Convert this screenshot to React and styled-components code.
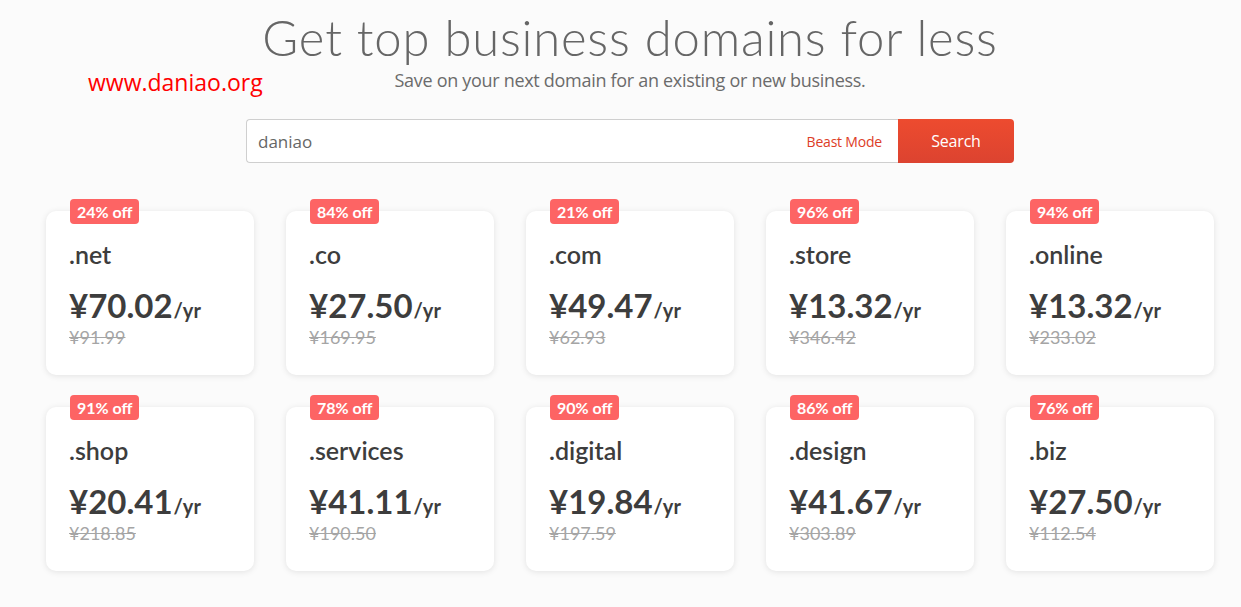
import React from "react";
import styled, { createGlobalStyle } from "styled-components";

const domains = [
  { off: "24% off", name: ".net", price: "¥70.02", old: "¥91.99" },
  { off: "84% off", name: ".co", price: "¥27.50", old: "¥169.95" },
  { off: "21% off", name: ".com", price: "¥49.47", old: "¥62.93" },
  { off: "96% off", name: ".store", price: "¥13.32", old: "¥346.42" },
  { off: "94% off", name: ".online", price: "¥13.32", old: "¥233.02" },
  { off: "91% off", name: ".shop", price: "¥20.41", old: "¥218.85" },
  { off: "78% off", name: ".services", price: "¥41.11", old: "¥190.50" },
  { off: "90% off", name: ".digital", price: "¥19.84", old: "¥197.59" },
  { off: "86% off", name: ".design", price: "¥41.67", old: "¥303.89" },
  { off: "76% off", name: ".biz", price: "¥27.50", old: "¥112.54" },
];

const App = () => {
  return (
    <Page>
      <GlobalStyle />
      <Watermark>www.daniao.org</Watermark>
      <Content>
        <Title>Get top business domains for less</Title>
        <Subtitle>Save on your next domain for an existing or new business.</Subtitle>
        <SearchForm>
          <InputWrap>
            <Input defaultValue="daniao" />
            <BeastMode>Beast Mode</BeastMode>
          </InputWrap>
          <SearchButton>Search</SearchButton>
        </SearchForm>
        <Grid>
          {domains.map((d) => (
            <Card key={d.name}>
              <Badge>{d.off}</Badge>
              <DomainName>{d.name}</DomainName>
              <Price>
                {d.price}
                <Per>/yr</Per>
              </Price>
              <OldPrice>{d.old}</OldPrice>
            </Card>
          ))}
        </Grid>
      </Content>
    </Page>
  );
};

const GlobalStyle = createGlobalStyle`
  body {
    margin: 0;
    background: #fbfbfb;
    font-family: Lato, "Open Sans", sans-serif;
  }
`;

const Page = styled.div`
  position: relative;
  width: 1241px;
  height: 607px;
  overflow: hidden;
  background: #fbfbfb;
`;

const Watermark = styled.div`
  position: absolute;
  left: 88px;
  top: 66px;
  font-family: "Open Sans", sans-serif;
  font-size: 23px;
  color: #ff0000;
`;

const Content = styled.div`
  width: 1168px;
  margin-left: 46px;
  display: flex;
  flex-direction: column;
  align-items: center;
`;

const Title = styled.h1`
  margin: 8px 0 0;
  font-family: Lato, sans-serif;
  font-weight: 300;
  font-size: 49px;
  line-height: 58px;
  color: #666;
  letter-spacing: 0.8px;
`;

const Subtitle = styled.p`
  margin: 1px 0 0;
  font-family: "Open Sans", sans-serif;
  font-size: 18px;
  line-height: 26px;
  color: #6b6b6b;
  letter-spacing: -0.3px;
`;

const SearchForm = styled.div`
  display: flex;
  width: 768px;
  height: 44px;
  margin-top: 26px;
`;

const InputWrap = styled.div`
  flex: 1;
  display: flex;
  align-items: center;
  background: #fff;
  border: 1px solid #cfcfcf;
  border-right: none;
  border-radius: 4px 0 0 4px;
  padding: 0 16px 0 9px;
`;

const Input = styled.input`
  flex: 1;
  border: none;
  outline: none;
  background: transparent;
  font-family: "Open Sans", sans-serif;
  font-size: 17px;
  color: #666;
`;

const BeastMode = styled.span`
  font-family: "Open Sans", sans-serif;
  font-size: 14px;
  color: #dd3d26;
  letter-spacing: -0.2px;
`;

const SearchButton = styled.button`
  width: 116px;
  border: none;
  border-radius: 0 4px 4px 0;
  background: linear-gradient(#ed4b2f, #dc4330);
  color: #fff;
  font-family: "Open Sans", sans-serif;
  font-size: 16px;
  letter-spacing: -0.2px;
  cursor: pointer;
`;

const Grid = styled.div`
  display: grid;
  grid-template-columns: repeat(5, 208px);
  grid-auto-rows: 164px;
  gap: 32px;
  width: 100%;
  margin-top: 48px;
`;

const Card = styled.div`
  position: relative;
  background: #fff;
  border-radius: 10px;
  box-shadow: 0 1px 6px rgba(0, 0, 0, 0.1);
  padding: 27px 23px 0;
  color: #3d3d3d;
`;

const Badge = styled.span`
  position: absolute;
  top: -12px;
  left: 24px;
  height: 25px;
  padding: 0 7px;
  border-radius: 4px;
  background: #fd6464;
  color: #fff;
  font-family: Lato, sans-serif;
  font-weight: 700;
  font-size: 16px;
  line-height: 25px;
`;

const DomainName = styled.div`
  font-family: Lato, sans-serif;
  font-weight: 600;
  font-size: 25px;
  line-height: 32px;
`;

const Price = styled.div`
  margin-top: 16px;
  font-family: Lato, sans-serif;
  font-weight: 700;
  font-size: 33px;
  line-height: 38px;
`;

const Per = styled.span`
  font-size: 20px;
  margin-left: 1px;
`;

const OldPrice = styled.div`
  margin-top: -4px;
  font-family: Lato, sans-serif;
  font-size: 18px;
  line-height: 24px;
  color: #a5a5a5;
  text-decoration: line-through;
`;

export default App;
